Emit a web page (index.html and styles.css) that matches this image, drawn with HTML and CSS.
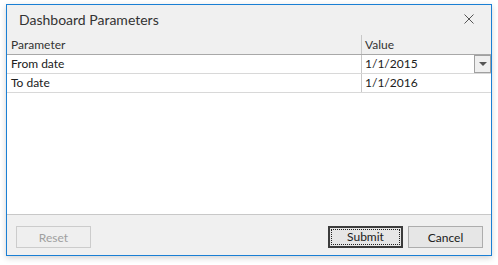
FILE: index.html
```html
<html>
    <head>
        <link rel="stylesheet" href="styles.css">
    </head>
    <body>
        <div class="dialog">
            <div class="titlebar">
                <span class="title">Dashboard Parameters</span>
                <svg class="close" width="10" height="10" viewBox="0 0 10 10">
                    <path d="M0.5 0.5 L9.5 9.5 M9.5 0.5 L0.5 9.5" stroke="#555" stroke-width="1" fill="none"/>
                </svg>
            </div>
            <div class="grid">
                <div class="row head">
                    <div class="cell name">Parameter</div>
                    <div class="cell value">Value</div>
                </div>
                <div class="row">
                    <div class="cell name">From date</div>
                    <div class="cell value">
                        <span class="text">1/1/2015</span>
                        <span class="dropdown"><span class="arrow"></span></span>
                    </div>
                </div>
                <div class="row">
                    <div class="cell name">To date</div>
                    <div class="cell value">1/1/2016</div>
                </div>
            </div>
            <div class="footer">
                <button class="btn disabled" type="button">Reset</button>
                <div class="spacer"></div>
                <button class="btn focused" type="button"><span class="focus">Submit</span></button>
                <button class="btn" type="button">Cancel</button>
            </div>
        </div>
    </body>
</html>
```

FILE: styles.css
```css
body{
    margin: 0;
    padding: 4px 0 0 6px;
    background-color: #ffffff;
    font-family: "Segoe UI", Lato, "Noto Sans", sans-serif;
    font-size: 12px;
    color: #202020;
}
.dialog{
    width: 484px;
    height: 250px;
    border: 1px solid #1a7fd4;
    background-color: #f0f0f0;
    display: flex;
    flex-direction: column;
    box-shadow: 0 2px 6px rgba(0, 0, 0, 0.18);
}
.titlebar{
    height: 30px;
    display: flex;
    align-items: center;
    padding: 0 17px 0 12px;
}
.title{
    flex: 1;
    font-size: 14px;
    color: #333333;
    margin-top: -2px;
}
.close{
    margin-top: -2px;
}
.grid{
    flex: 1;
    background-color: #ffffff;
    border-bottom: 1px solid #c8c8c8;
}
.row{
    display: flex;
    height: 18px;
    border-bottom: 1px solid #d8d8d8;
}
.row.head{
    height: 19px;
    background-color: #f0f0f0;
    border-bottom: 1px solid #a8a8a8;
}
.cell{
    display: flex;
    align-items: center;
    padding-left: 4px;
    line-height: 18px;
}
.cell.name{
    width: 350px;
    border-right: 1px solid #c8c8c8;
}
.cell.value{
    flex: 1;
    padding-left: 3px;
}
.text{
    flex: 1;
}
.row.head .cell{
    color: #333333;
}
.dropdown{
    width: 15px;
    height: 16px;
    border: 1px solid #a0a0a0;
    background-color: #efefef;
    display: flex;
    align-items: center;
    justify-content: center;
}
.arrow{
    width: 0;
    height: 0;
    border-left: 4px solid transparent;
    border-right: 4px solid transparent;
    border-top: 4px solid #555555;
}
.footer{
    height: 40px;
    display: flex;
    align-items: flex-start;
    padding: 11px 8px 0 9px;
    box-sizing: border-box;
}
.spacer{
    flex: 1;
}
.btn{
    width: 75px;
    height: 22px;
    margin: 0 0 0 5px;
    padding: 0;
    border: 1px solid #adadad;
    background-color: #e6e6e6;
    font-family: "Segoe UI", Lato, "Noto Sans", sans-serif;
    font-size: 12px;
    color: #202020;
}
.btn.disabled{
    margin-left: 0;
    border-color: #cccccc;
    background-color: #efefef;
    color: #a0a0a0;
}
.btn.focused{
    border: 2px solid #3c3c3c;
    padding: 1px;
}
.focus{
    display: block;
    height: 100%;
    box-sizing: border-box;
    border: 1px dotted #202020;
    line-height: 14px;
}
```
